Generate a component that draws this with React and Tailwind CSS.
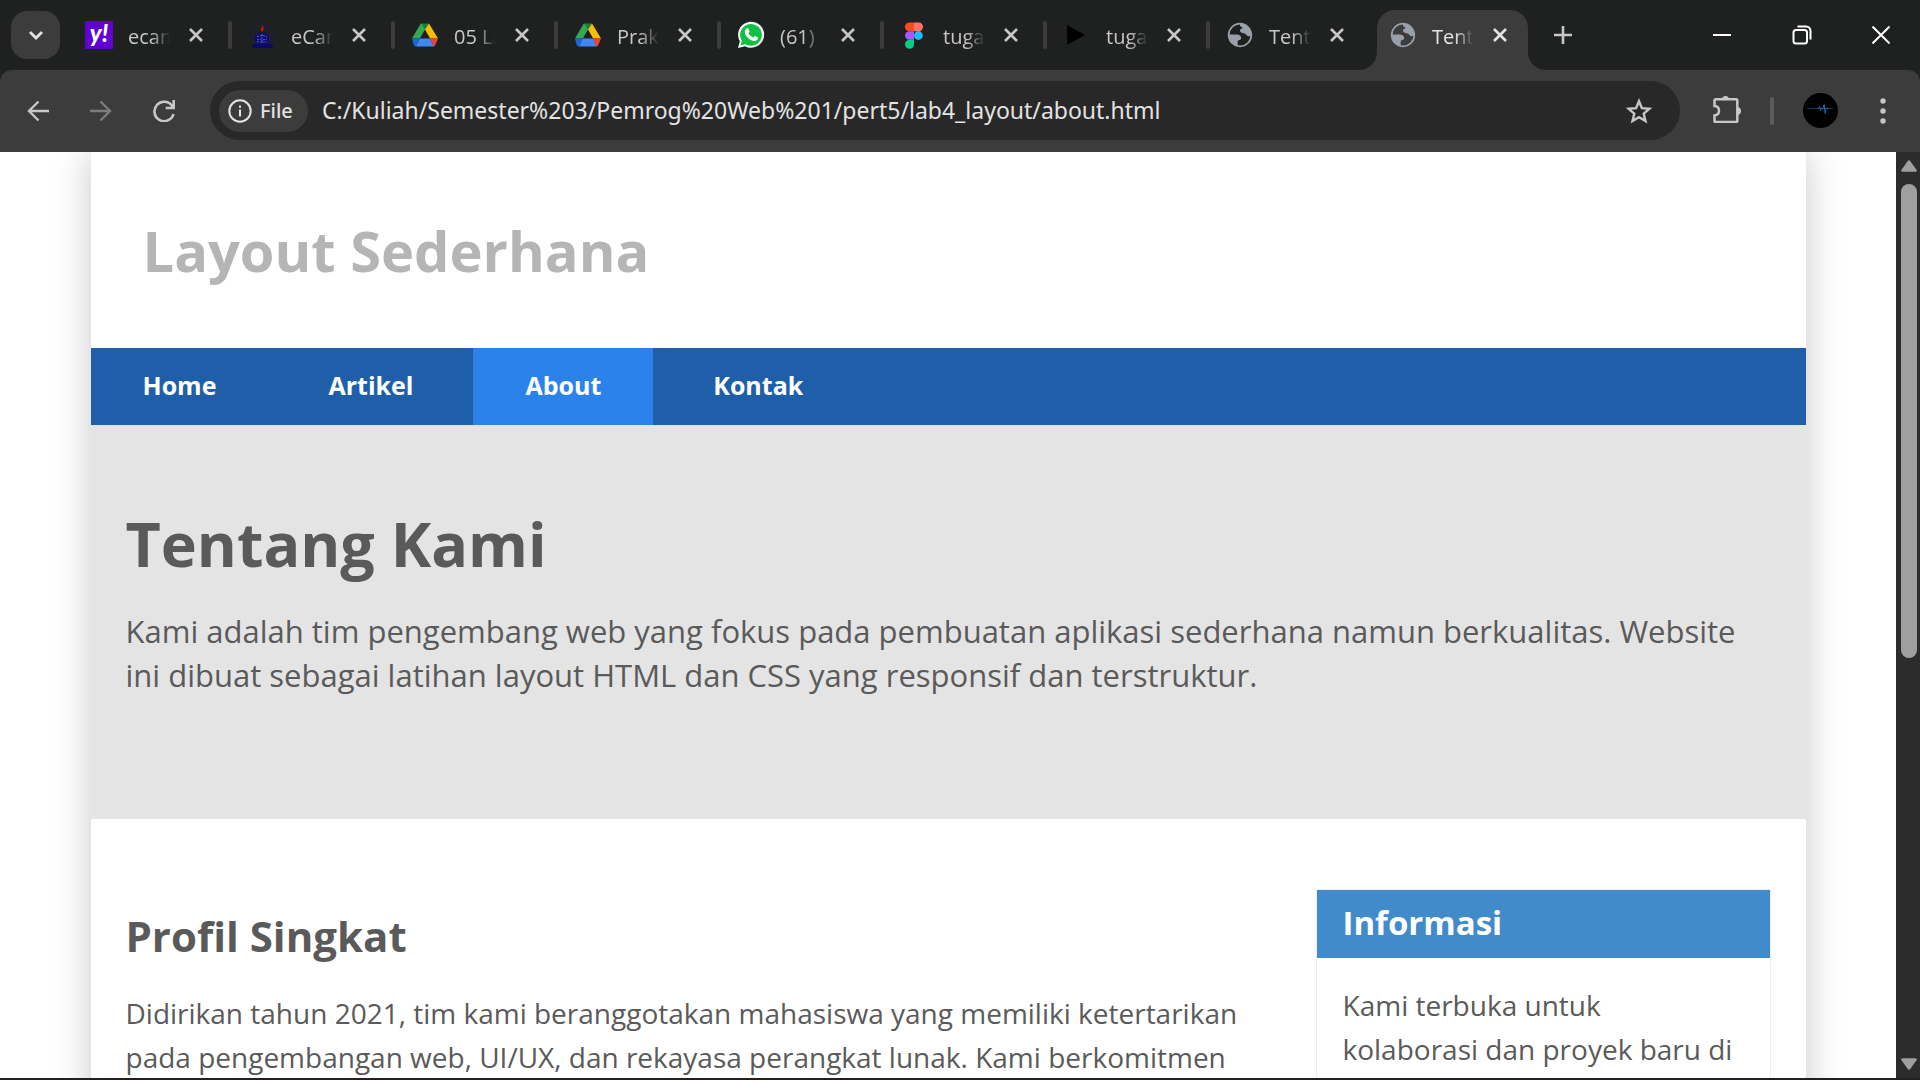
import React from "react";

function YahooIcon() {
  return (
    <span className="flex size-7 items-center justify-center bg-[#6001d2] pb-1 font-['Lato',sans-serif] text-2xl leading-none font-black text-white italic">
      y!
    </span>
  );
}

function CampusIcon() {
  return (
    <svg viewBox="0 0 28 28" className="size-7">
      <circle cx="14" cy="13" r="11" fill="none" stroke="#1b1b4e" strokeWidth="1.600" strokeDasharray="2 1" />
      <path d="M5 23h19l1 4H4z" fill="#0a0a66" />
      <path d="M7 14l7-3 7 3v7l-7 3-7-3z" fill="#0b0b78" />
      <path d="M9 15.500l5-1 5 1M9 18l5 1 5-1M9 20.500l5 1 5-1M14 13v9" stroke="#5a62b0" strokeWidth="1" strokeDasharray="2 1" fill="none" />
      <path d="M13 10c-1.500-2 1-3 1.500-6 1.500 2 1.500 5 0 6.500z" fill="#c01414" />
    </svg>
  );
}

function DriveIcon() {
  return (
    <svg viewBox="0 0 28 28" className="size-7">
      <path d="M10 2.500h8l-4 7z" fill="#188038" />
      <path d="M9.500 3L1 17.500h7.800L14 8.500 10.400 2.500z" fill="#34a853" />
      <path d="M18 2.500L27 17.500h-7.800L14 8.500z" fill="#fbbc04" />
      <path d="M1 17.500h7.800L5 25.500c-1 0-2-1-2.500-2z" fill="#1967d2" />
      <path d="M8.800 17.500h10.400L23 25.500H5z" fill="#4285f4" />
      <path d="M19.200 17.500H27l-2.500 6c-.5 1-1 2-2 2z" fill="#ea4335" />
    </svg>
  );
}

function WhatsAppIcon() {
  return (
    <svg viewBox="0 0 28 28" className="size-7">
      <path d="M1 27l1.900-6.700A13 13 0 1 1 8 25.200z" fill="#fff" />
      <path d="M3.500 24.500l1.300-4.700A10.900 10.900 0 1 1 8.300 23.200z" fill="#10c143" />
      <path d="M9.500 7.500c.8-.6 1.500-.5 1.900.3l1 2.400c.2.500-.8 1.500-1 1.900.9 2 2.600 3.500 4.800 4.400.5-.3 1.300-1.700 1.900-1.500l2.500 1.200c.7.400.2 2.300-.6 2.900-2 1.500-4.500.8-7-.7-2.600-1.600-5-4.500-5.200-7 0-1.500.7-3 1.700-3.900z" fill="#fff" />
    </svg>
  );
}

function FigmaIcon() {
  return (
    <svg viewBox="0 0 28 28" className="size-7">
      <path d="M14 1.500H9.300a4.300 4.300 0 0 0 0 8.700H14z" fill="#f24e1e" />
      <path d="M14 1.500h4.700a4.300 4.300 0 0 1 0 8.700H14z" fill="#ff7262" />
      <path d="M14 10.200H9.300a4.300 4.300 0 0 0 0 8.600H14z" fill="#a259ff" />
      <circle cx="18.400" cy="14.500" r="4.400" fill="#1abcfe" />
      <path d="M9.300 18.800H14v4.400a4.500 4.500 0 1 1-4.700-4.400z" fill="#0acf83" />
    </svg>
  );
}

function PlayIcon() {
  return (
    <svg viewBox="0 0 28 28" className="size-7">
      <path d="M4 4l18 10L4 24z" fill="#000" />
    </svg>
  );
}

function GlobeIcon() {
  return (
    <svg viewBox="0 0 24 24" className="size-7 text-[#9aa0a9]">
      <circle cx="12" cy="12" r="9.700" fill="none" stroke="currentColor" strokeWidth="1.500" />
      <path d="M12 2.200c5.500.2 9.700 4.300 9.800 9.300-1 1.300-2.500 2.300-3.800 1-1-1-1.200-2-3-2.100-2-.1-3-.8-3-2.200 0-1.200 1-1.500 2-1.700 0-1.500-.8-1.500-2-2z" fill="currentColor" />
      <path d="M2.300 11.500H9c2.500 0 4 1.200 4 3 0 1-.5 1.500-1.500 1.700-1.300.2-1.500 1-1.500 2v3.500C5.500 20.800 2.300 17 2.300 11.500z" fill="currentColor" />
    </svg>
  );
}

const TABS = [
  { icon: YahooIcon, title: "ecampus" },
  { icon: CampusIcon, title: "eCampus" },
  { icon: DriveIcon, title: "05 Layout" },
  { icon: DriveIcon, title: "Praktikum" },
  { icon: WhatsAppIcon, title: "(61)" },
  { icon: FigmaIcon, title: "tugas" },
  { icon: PlayIcon, title: "tugas" },
  { icon: GlobeIcon, title: "Tentang" },
  { icon: GlobeIcon, title: "Tentang", active: true },
];

function Tab({ icon: Icon, title, active, divider }) {
  return (
    <div className="relative flex h-full w-[163px] shrink items-end">
      {active && (
        <div className="absolute inset-x-[6px] top-[10px] bottom-0 rounded-t-[18px] bg-[#3c3c3c]">
          <svg viewBox="0 0 18 18" className="absolute bottom-0 -left-[18px] size-[18px]">
            <path d="M18 0v18H0A18 18 0 0 0 18 0z" fill="#3c3c3c" />
          </svg>
          <svg viewBox="0 0 18 18" className="absolute -right-[18px] bottom-0 size-[18px]">
            <path d="M0 0v18h18A18 18 0 0 1 0 0z" fill="#3c3c3c" />
          </svg>
        </div>
      )}
      <div className="relative flex h-full w-full items-center pl-[18px]">
        <span className="shrink-0">
          <Icon />
        </span>
        <span
          className={
            "ml-[15px] w-[42px] overflow-hidden pt-1 font-['Open_Sans',sans-serif] text-xl whitespace-nowrap [mask-image:linear-gradient(to_right,black_55%,transparent)] " +
            (active ? "text-[#e3e3e3]" : "text-[#c7c7c7]")
          }
        >
          {title}
        </span>
        <button type="button" aria-label="Close tab" className="ml-3 flex size-7 shrink-0 items-center justify-center">
          <svg viewBox="0 0 14 14" className={active ? "size-[14px] text-[#e3e3e3]" : "size-[14px] text-[#c7c7c7]"}>
            <path d="M1 1l12 12M13 1L1 13" stroke="currentColor" strokeWidth="2.600" />
          </svg>
        </button>
        {divider && <span className="mr-[-2px] ml-auto h-7 w-1 rounded-full bg-[#3c3c3c]" />}
      </div>
    </div>
  );
}

function TabStrip() {
  return (
    <div className="flex h-[70px] items-center bg-[#1f2120]">
      <button type="button" aria-label="Search tabs" className="ml-[11px] flex h-12 w-[49px] shrink-0 items-center justify-center rounded-2xl bg-[#3c3c3c]">
        <svg viewBox="0 0 16 16" className="size-4">
          <path d="M2 5l6 6 6-6" fill="none" stroke="#e3e3e3" strokeWidth="2.800" />
        </svg>
      </button>
      <div className="ml-[7px] flex h-full min-w-0">
        {TABS.map((tab, i) => (
          <Tab key={i} {...tab} divider={i < 7} />
        ))}
      </div>
      <button type="button" aria-label="New tab" className="ml-[13px] flex size-8 shrink-0 items-center justify-center">
        <svg viewBox="0 0 18 18" className="size-[18px]">
          <path d="M9 0v18M0 9h18" stroke="#c7c7c7" strokeWidth="2.600" />
        </svg>
      </button>
      <div className="ml-auto flex h-full shrink-0 text-white">
        <button type="button" aria-label="Minimize" className="flex w-20 items-center justify-center">
          <svg viewBox="0 0 18 18" className="size-[18px]">
            <path d="M0 9h18" stroke="currentColor" strokeWidth="2" />
          </svg>
        </button>
        <button type="button" aria-label="Restore" className="flex w-20 items-center justify-center">
          <svg viewBox="0 0 20 20" className="size-5" fill="none" stroke="currentColor" strokeWidth="2">
            <rect x="1.500" y="5" width="13.500" height="13.500" rx="2.500" />
            <path d="M5.500 1.500H14a4.500 4.500 0 0 1 4.500 4.500v8.500" />
          </svg>
        </button>
        <button type="button" aria-label="Close" className="flex w-[78px] items-center justify-center">
          <svg viewBox="0 0 18 18" className="size-[18px]">
            <path d="M0.500 0.500l17 17M17.500 0.500l-17 17" stroke="currentColor" strokeWidth="2" />
          </svg>
        </button>
      </div>
    </div>
  );
}

function ToolButton({ label, dim, children }) {
  return (
    <button type="button" aria-label={label} className={"flex w-[63px] shrink-0 items-center justify-center " + (dim ? "text-[#7c7c7c]" : "text-[#c7c7c7]")}>
      {children}
    </button>
  );
}

function Toolbar() {
  return (
    <div className="bg-[#1f2120]">
      <div className="flex h-[82px] items-center rounded-t-xl bg-[#3c3c3c] pb-[1px] pl-[6px]">
        <ToolButton label="Back">
          <svg viewBox="0 0 22 22" className="size-[22px]" fill="none" stroke="currentColor" strokeWidth="2.400">
            <path d="M22 11H2M11.500 1.500L2 11l9.500 9.500" />
          </svg>
        </ToolButton>
        <ToolButton label="Forward" dim>
          <svg viewBox="0 0 22 22" className="size-[22px]" fill="none" stroke="currentColor" strokeWidth="2.400">
            <path d="M0 11h20M10.500 1.500L20 11l-9.500 9.500" />
          </svg>
        </ToolButton>
        <ToolButton label="Reload">
          <svg viewBox="0 0 22 22" className="size-[22px]" fill="none" stroke="currentColor" strokeWidth="2.600">
            <path d="M20.500 14A9.700 9.700 0 1 1 19.500 6.500M20.700 0v8h-8" />
          </svg>
        </ToolButton>
        <div className="ml-[15px] flex h-[59px] min-w-0 flex-1 items-center rounded-full bg-[#282828] pl-[9px]">
          <button type="button" className="flex h-[42px] w-[89px] shrink-0 items-center rounded-full bg-[#3c3c3c] pl-[9px] text-xl font-medium text-[#e3e3e3]">
            <svg viewBox="0 0 24 24" className="size-6" fill="none" stroke="currentColor" strokeWidth="2">
              <circle cx="12" cy="12" r="10.700" />
              <path d="M12 10.500v7M12 6.500v2.200" />
            </svg>
            <span className="ml-2">File</span>
          </button>
          <input
            aria-label="Address"
            readOnly
            value="C:/Kuliah/Semester%203/Pemrog%20Web%201/pert5/lab4_layout/about.html"
            className="ml-[14px] min-w-0 flex-1 bg-transparent text-[23px] text-[#e3e3e3] outline-none"
          />
          <button type="button" aria-label="Bookmark this page" className="mr-[25px] flex size-8 shrink-0 items-center justify-center text-[#c7c7c7]">
            <svg viewBox="0 0 28 28" className="size-7" fill="none" stroke="currentColor" strokeWidth="2.400">
              <path d="M14 4.200l2.900 7 7.500.6-5.700 4.900 1.800 7.400L14 20.200l-6.500 3.900 1.800-7.400-5.700-4.900 7.500-.6z" />
            </svg>
          </button>
        </div>
        <button type="button" aria-label="Extensions" className="ml-[33px] shrink-0 pb-1 text-[#c7c7c7]">
          <svg viewBox="0 0 28 28" className="size-7">
            <path d="M3 4.300H23.300a1 1 0 0 1 1 1V26a1 1 0 0 1-1 1H2.500a1 1 0 0 1-1-1V20.500c3-.3 4.500-2.200 4.500-4.700s-1.500-4.400-4.500-4.700V5.300a1 1 0 0 1 1-1z" fill="none" stroke="currentColor" strokeWidth="2.500" />
            <path d="M9 4.500a3.500 3.500 0 0 1 7 0zM24 12a4 4 0 0 1 0 8z" fill="currentColor" />
          </svg>
        </button>
        <span className="ml-[29px] h-7 w-1 shrink-0 rounded-full bg-[#5c5c5c]" />
        <button type="button" aria-label="Profile" className="ml-[29px] size-[35px] shrink-0 rounded-full bg-black">
          <svg viewBox="0 0 35 35" className="size-[35px]" fill="none">
            <path d="M4 15.500h26" stroke="#123c5c" strokeWidth="1" />
            <path d="M15.500 15.500l1-2 1 4 1-2h1.500l1.200-4 1 9 1-5h2" stroke="#1f6ea8" strokeWidth="1" />
          </svg>
        </button>
        <button type="button" aria-label="Menu" className="mr-[22px] ml-[30px] shrink-0 text-[#c7c7c7]">
          <svg viewBox="0 0 30 26" className="h-[26px] w-[30px]" fill="currentColor">
            <circle cx="15" cy="3" r="2.700" />
            <circle cx="15" cy="13" r="2.700" />
            <circle cx="15" cy="23" r="2.700" />
          </svg>
        </button>
      </div>
    </div>
  );
}

const LINKS = ["Home", "Artikel", "About", "Kontak"];

function Page() {
  return (
    <div className="mx-auto min-h-full max-w-[1715px] bg-white text-[#5a5a5a] shadow-[0_0_35px_rgba(0,0,0,0.22)]">
      <header className="px-[52px] py-[68px]">
        <h1 className="text-[56px] leading-[60px] font-bold text-[#b5b5b5]">Layout Sederhana</h1>
      </header>
      <nav className="flex h-[77px] gap-2 bg-[#1f5faa]">
        {LINKS.map((link) => (
          <a
            key={link}
            href="#"
            className={"flex items-center px-[52px] pb-[2px] text-[25px] font-bold text-white " + (link === "About" ? "bg-[#2b83ea]" : "")}
          >
            {link}
          </a>
        ))}
      </nav>
      <section className="bg-[#e4e4e4] px-[35px] pt-[89px] pb-[122px]">
        <h1 className="text-[61px] leading-[60px] font-bold">Tentang Kami</h1>
        <p className="mt-[35px] text-[31px] leading-[44px]">
          Kami adalah tim pengembang web yang fokus pada pembuatan aplikasi sederhana namun berkualitas. Website ini dibuat sebagai latihan layout HTML dan CSS yang responsif dan terstruktur.
        </p>
      </section>
      <div className="flex items-start gap-[70px] px-[35px] pt-[70px]">
        <section className="min-w-0 flex-1 pt-[25px]">
          <h2 className="text-[42px] leading-[44px] font-bold">Profil Singkat</h2>
          <p className="mt-[33px] text-[28px] leading-[44px]">
            Didirikan tahun 2021, tim kami beranggotakan mahasiswa yang memiliki ketertarikan pada pengembangan web, UI/UX, dan rekayasa perangkat lunak. Kami berkomitmen
          </p>
        </section>
        <aside className="w-[455px] shrink-0 border border-[#eeeeee]">
          <h3 className="bg-[#428bca] px-[26px] pt-[11px] pb-[13px] text-[33px] leading-[44px] font-bold text-white">Informasi</h3>
          <p className="pt-[25px] pr-[35px] pb-10 pl-[26px] text-[28px] leading-[44px]">Kami terbuka untuk kolaborasi dan proyek baru di</p>
        </aside>
      </div>
    </div>
  );
}

function Scrollbar() {
  return (
    <div className="flex w-6 shrink-0 flex-col items-center bg-[#2c2c2c] pt-2 pb-2 pl-[2px]">
      <svg viewBox="0 0 16 12" className="h-3 w-4 shrink-0">
        <path d="M8 1.500L14.500 10.500H1.500z" fill="#9f9f9f" stroke="#9f9f9f" strokeWidth="2.500" strokeLinejoin="round" />
      </svg>
      <div className="mt-3 mb-3 min-h-0 w-4 flex-1">
        <div className="h-[55%] rounded-full bg-[#9f9f9f]" />
      </div>
      <svg viewBox="0 0 16 12" className="h-3 w-4 shrink-0">
        <path d="M8 10.500L14.500 1.500H1.500z" fill="#9f9f9f" stroke="#9f9f9f" strokeWidth="2.500" strokeLinejoin="round" />
      </svg>
    </div>
  );
}

export default function App() {
  return (
    <div className="flex h-screen flex-col overflow-hidden border-b-2 border-[#231f1f] font-['Open_Sans',sans-serif]">
      <div className="shrink-0 font-['Noto_Sans',sans-serif]">
        <TabStrip />
        <Toolbar />
      </div>
      <div className="flex min-h-0 flex-1">
        <main className="min-w-0 flex-1 overflow-hidden bg-white">
          <Page />
        </main>
        <Scrollbar />
      </div>
    </div>
  );
}
